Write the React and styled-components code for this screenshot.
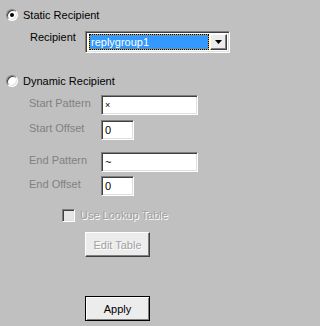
import React from "react";
import styled, { createGlobalStyle } from "styled-components";

const GlobalStyle = createGlobalStyle`
  body {
    margin: 0;
    background: #c0c0c0;
    font-family: "Liberation Sans", Arial, sans-serif;
    font-size: 11px;
  }
`;

const Panel = styled.div`
  width: 235px;
  height: 326px;
  box-sizing: border-box;
  display: flex;
  flex-direction: column;
  padding: 7px 0 5px 0;
  background: #c0c0c0;
  color: #000;
  line-height: 13px;
`;

const RadioRow = styled.label`
  display: flex;
  align-items: center;
  height: 16px;
  padding-left: 6px;
  gap: 5px;
  margin-top: ${(p) => p.$top || 0}px;
`;

const Radio = styled.span`
  position: relative;
  width: 12px;
  height: 12px;
  box-sizing: border-box;
  border-radius: 50%;
  background: #fff;
  border: 1px solid;
  border-color: #808080 #ffffff #ffffff #808080;
  box-shadow: inset 1px 1px 0 #404040, inset -1px -1px 0 #dfdfdf;

  &::after {
    content: "";
    display: ${(p) => (p.$checked ? "block" : "none")};
    position: absolute;
    left: 3px;
    top: 3px;
    width: 4px;
    height: 4px;
    border-radius: 50%;
    background: #000;
  }
`;

const ComboRow = styled.div`
  display: flex;
  align-items: flex-start;
  padding-left: 30px;
  margin-top: 8px;
`;

const FieldLabel = styled.span`
  width: ${(p) => p.$width}px;
  flex-shrink: 0;
  padding-top: ${(p) => p.$pad || 0}px;
  color: ${(p) => (p.$disabled ? "#808080" : "#000")};
`;

const Combo = styled.div`
  width: 145px;
  height: 22px;
  box-sizing: border-box;
  display: flex;
  align-items: center;
  gap: 1px;
  padding: 2px;
  background: #fff;
  border: 1px solid;
  border-color: #808080 #ffffff #ffffff #808080;
  box-shadow: inset 1px 1px 0 #404040, inset -1px -1px 0 #dfdfdf;
`;

const ComboValue = styled.span`
  flex: 1;
  height: 16px;
  box-sizing: border-box;
  margin-left: 1px;
  border: 1px dotted #000;
  background: #ff9900;
  display: flex;

  span {
    flex: 1;
    background: #3399ff;
    color: #fff;
    padding-left: 1px;
    line-height: 14px;
  }
`;

const ArrowButton = styled.span`
  width: 17px;
  height: 16px;
  box-sizing: border-box;
  display: flex;
  align-items: center;
  justify-content: center;
  background: #ececec;
  border: 1px solid;
  border-color: #ffffff #404040 #404040 #ffffff;
  box-shadow: inset -1px -1px 0 #808080;
`;

const Fields = styled.div`
  display: flex;
  flex-direction: column;
  margin-top: 6px;
  padding-left: 29px;
`;

const FieldRow = styled.div`
  display: flex;
  align-items: flex-start;
  height: 20px;
  margin-top: ${(p) => p.$top || 0}px;
`;

const TextBox = styled.div`
  width: ${(p) => p.$width}px;
  height: 20px;
  box-sizing: border-box;
  background: #fff;
  border: 1px solid;
  border-color: #808080 #ffffff #ffffff #808080;
  box-shadow: inset 1px 1px 0 #404040, inset -1px -1px 0 #dfdfdf;
  padding: 3px 0 0 3px;
  font-size: ${(p) => p.$small ? 9 : 11}px;
  line-height: 13px;
  color: #000;
`;

const CheckRow = styled.div`
  display: flex;
  align-items: center;
  gap: 5px;
  height: 13px;
  margin-top: 13px;
  padding-left: 62px;
`;

const CheckBox = styled.span`
  width: 13px;
  height: 13px;
  box-sizing: border-box;
  background: #e6e6e6;
  border: 1px solid;
  border-color: #808080 #ffffff #ffffff #808080;
  box-shadow: inset 1px 1px 0 #404040, inset -1px -1px 0 #dfdfdf;
`;

const Embossed = styled.span`
  color: #a0a0a0;
  text-shadow: 1px 1px 0 #fff;
`;

const Button = styled.button`
  width: 65px;
  height: 25px;
  margin: ${(p) => (p.$push ? "auto" : "10px")} 0 0 85px;
  padding: 0;
  box-sizing: border-box;
  background: #ececec;
  font-family: inherit;
  font-size: 11px;
  color: #000;
  border: 1px solid;
  border-color: ${(p) => (p.$default ? "#000" : "#ffffff #404040 #404040 #ffffff")};
  box-shadow: ${(p) =>
    p.$default
      ? "inset 1px 1px 0 #fff, inset -1px -1px 0 #808080"
      : "inset -1px -1px 0 #808080"};
`;

const App = () => {
  return (
    <>
      <GlobalStyle />
      <Panel>
        <RadioRow>
          <Radio $checked />
          Static Recipient
        </RadioRow>

        <ComboRow>
          <FieldLabel $width={55}>Recipient</FieldLabel>
          <Combo>
            <ComboValue>
              <span>replygroup1</span>
            </ComboValue>
            <ArrowButton>
              <svg width="7" height="4" viewBox="0 0 7 4">
                <path d="M0 0h7L3.5 4z" fill="#000" />
              </svg>
            </ArrowButton>
          </Combo>
        </ComboRow>

        <RadioRow $top={20}>
          <Radio />
          Dynamic Recipient
        </RadioRow>

        <Fields>
          <FieldRow>
            <FieldLabel $width={72} $pad={2} $disabled>Start Pattern</FieldLabel>
            <TextBox $width={97} $small>×</TextBox>
          </FieldRow>
          <FieldRow $top={5}>
            <FieldLabel $width={72} $pad={2} $disabled>Start Offset</FieldLabel>
            <TextBox $width={33}>0</TextBox>
          </FieldRow>
          <FieldRow $top={12}>
            <FieldLabel $width={72} $pad={2} $disabled>End Pattern</FieldLabel>
            <TextBox $width={97}>~</TextBox>
          </FieldRow>
          <FieldRow $top={4}>
            <FieldLabel $width={72} $pad={2} $disabled>End Offset</FieldLabel>
            <TextBox $width={33}>0</TextBox>
          </FieldRow>
        </Fields>

        <CheckRow>
          <CheckBox />
          <Embossed>Use Lookup Table</Embossed>
        </CheckRow>

        <Button disabled>
          <Embossed>Edit Table</Embossed>
        </Button>

        <Button $default $push>
          Apply
        </Button>
      </Panel>
    </>
  );
};

export default App;
